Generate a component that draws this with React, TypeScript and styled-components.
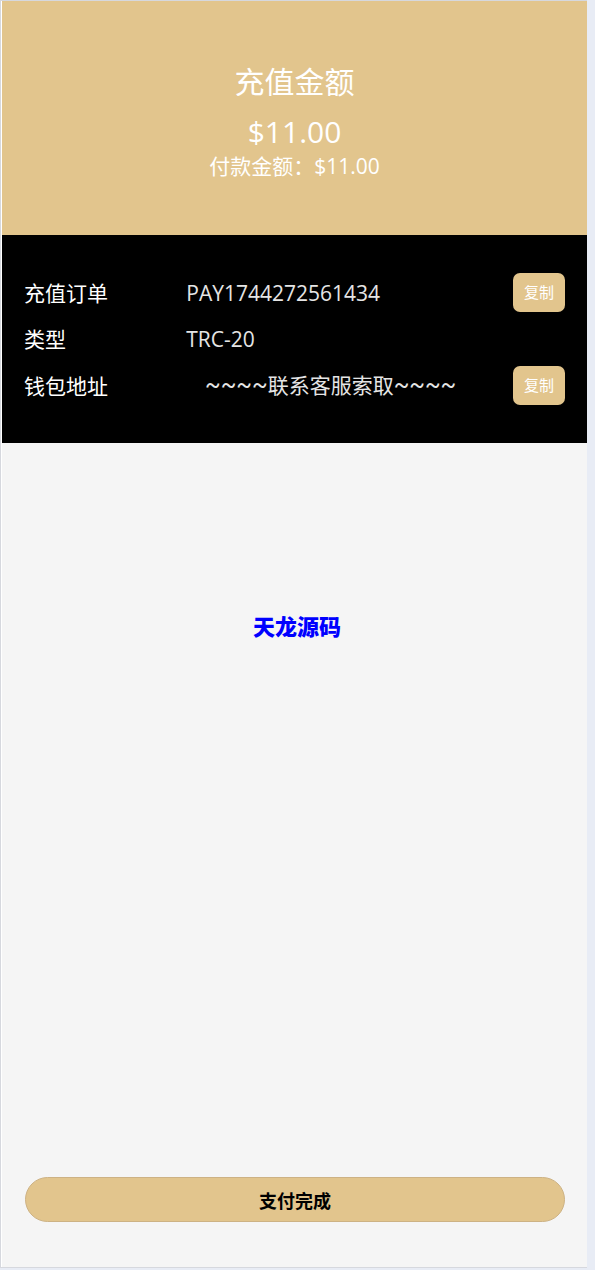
import React from "react";
import styled, { createGlobalStyle } from "styled-components";

const GlobalStyle = createGlobalStyle`
  * { box-sizing: border-box; }
  body {
    margin: 0;
    background: #e8ecf5;
    font-family: "Open Sans", "Noto Sans CJK SC", sans-serif;
  }
`;

const Page = styled.div`
  min-height: 100vh;
  display: flex;
  padding: 0 8px 2px 0;
`;

const Screen = styled.main`
  flex: 1;
  display: flex;
  flex-direction: column;
  padding-left: 1px;
  border: solid #d6d8de;
  border-width: 1px 0 1px 1px;
  background: linear-gradient(90deg, #ffffff 1px, #f5f5f5 1px);
`;

const Summary = styled.header`
  display: flex;
  flex-direction: column;
  align-items: center;
  padding: 56px 22px 60px;
  background: #e2c58d;
  color: #ffffff;
  text-align: center;
`;

const Heading = styled.h1`
  margin: 0;
  font-size: 30px;
  line-height: 50px;
  font-weight: 400;
`;

const Amount = styled.p`
  margin: 0;
  font-size: 30px;
  line-height: 50px;
`;

const Payable = styled.p`
  margin: 0;
  font-size: 21px;
  line-height: 18px;
`;

const Details = styled.dl`
  display: flex;
  flex-direction: column;
  gap: 15px;
  margin: 0;
  padding: 38px 22px;
  background: #000000;
  font-size: 21px;
  line-height: 24px;
`;

const Row = styled.div`
  display: grid;
  grid-template-columns: 30% 1fr auto;
  align-items: center;
`;

const Label = styled.dt`
  color: #ffffff;
`;

const Value = styled.dd<{ $centered?: boolean }>`
  margin: 0;
  color: #e5e5e5;
  text-align: ${(p) => (p.$centered ? "center" : "left")};
  padding-right: ${(p) => (p.$centered ? "38px" : "0")};
`;

const Tildes = styled.span`
  font-family: Roboto, sans-serif;
  font-size: 23px;
`;

const CopyButton = styled.button`
  width: 52px;
  height: 39px;
  padding: 0 0 2px;
  border: 0;
  border-radius: 7px;
  background: #e2c58d;
  color: #ffffff;
  font-family: inherit;
  font-size: 15px;
`;

const Content = styled.section`
  flex: 1;
  display: flex;
  flex-direction: column;
  justify-content: space-between;
  align-items: center;
  padding: 168px 22px 45px 23px;
`;

const Brand = styled.p`
  margin: 0;
  padding-left: 4px;
  color: #0000ff;
  font-size: 22px;
  line-height: 30px;
  font-weight: 900;
`;

const DoneButton = styled.button`
  width: 100%;
  height: 45px;
  padding: 0;
  border: 1px solid #cdb284;
  border-radius: 23px;
  background: #e2c58d;
  color: #000000;
  font-family: inherit;
  font-size: 18px;
  font-weight: 700;
`;

export default function App() {
  return (
    <>
      <GlobalStyle />
      <Page>
        <Screen>
          <Summary>
            <Heading>充值金额</Heading>
            <Amount>$11.00</Amount>
            <Payable>付款金额：$11.00</Payable>
          </Summary>
          <Details>
            <Row>
              <Label>充值订单</Label>
              <Value>PAY1744272561434</Value>
              <CopyButton type="button">复制</CopyButton>
            </Row>
            <Row>
              <Label>类型</Label>
              <Value>TRC-20</Value>
            </Row>
            <Row>
              <Label>钱包地址</Label>
              <Value $centered>
                <Tildes>~~~~</Tildes>联系客服索取<Tildes>~~~~</Tildes>
              </Value>
              <CopyButton type="button">复制</CopyButton>
            </Row>
          </Details>
          <Content>
            <Brand>天龙源码</Brand>
            <DoneButton type="button">支付完成</DoneButton>
          </Content>
        </Screen>
      </Page>
    </>
  );
}
